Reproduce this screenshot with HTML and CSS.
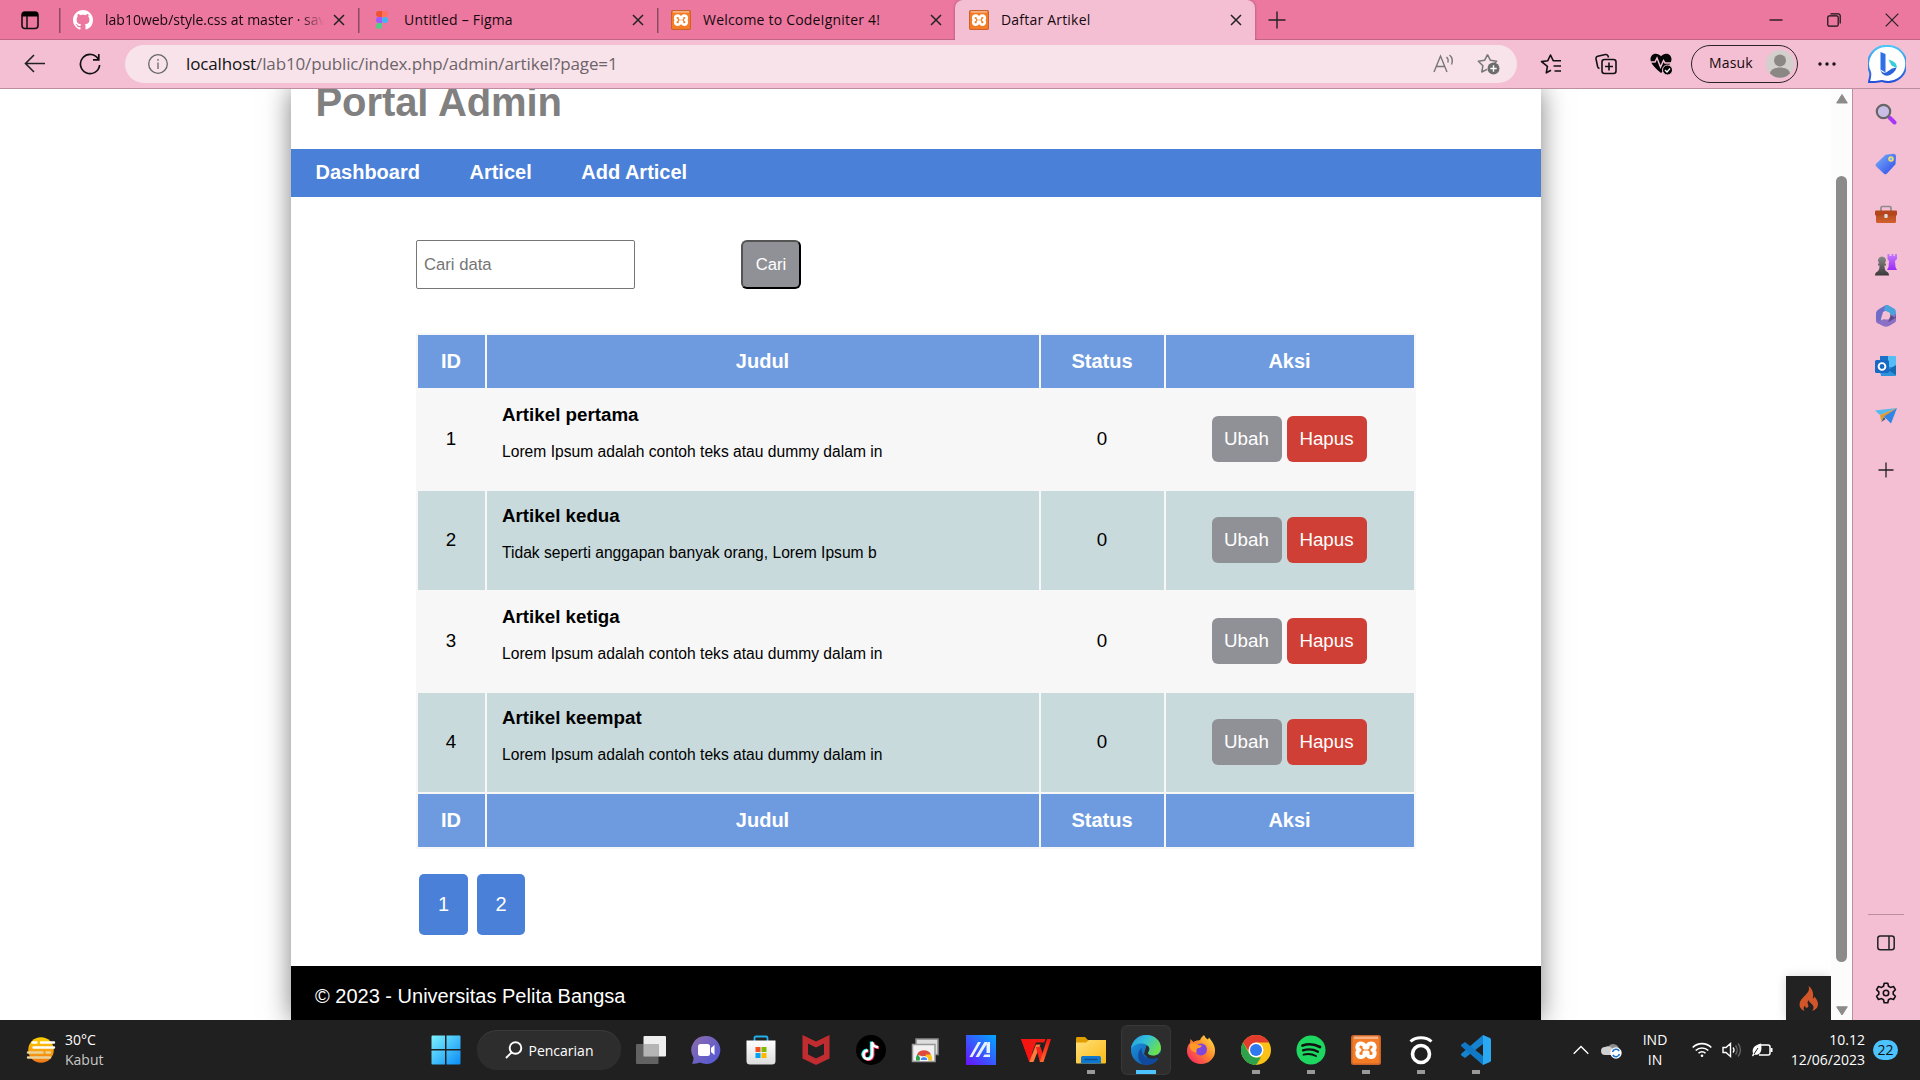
FILE: index.html
```html
<!DOCTYPE html>
<html lang="id">
<head>
<meta charset="utf-8">
<title>Daftar Artikel</title>
<link rel="stylesheet" href="styles.css">
</head>
<body>
<svg class="defs" width="0" height="0" aria-hidden="true">
  <defs>
    <linearGradient id="g-win" x1="0" y1="0" x2="1" y2="1"><stop offset="0" stop-color="#7df3ff"/><stop offset="1" stop-color="#0a8cf5"/></linearGradient>
    <linearGradient id="g-sun" x1="0" y1="0" x2="0" y2="1"><stop offset="0" stop-color="#ffd000"/><stop offset="1" stop-color="#f07818"/></linearGradient>
    <linearGradient id="g-bing" x1="0" y1="0" x2="0" y2="1"><stop offset="0" stop-color="#49c7f5"/><stop offset="1" stop-color="#2350d8"/></linearGradient>
    <linearGradient id="g-chat" x1="0" y1="0" x2="1" y2="1"><stop offset="0" stop-color="#8d6cab"/><stop offset="1" stop-color="#4f58d8"/></linearGradient>
    <linearGradient id="g-asus" x1="1" y1="0" x2="0" y2="1"><stop offset="0" stop-color="#00a8ff"/><stop offset="1" stop-color="#6a10ff"/></linearGradient>
    <linearGradient id="g-folder" x1="0" y1="0" x2="1" y2="1"><stop offset="0" stop-color="#ffe07a"/><stop offset="1" stop-color="#fbb914"/></linearGradient>
    <linearGradient id="g-edge" x1="0" y1="0" x2="1" y2=".5"><stop offset="0" stop-color="#2497e0"/><stop offset=".5" stop-color="#33c1d8"/><stop offset="1" stop-color="#6be04e"/></linearGradient>
    <linearGradient id="g-edge2" x1="0" y1="0" x2="1" y2="1"><stop offset="0" stop-color="#1d9be6"/><stop offset="1" stop-color="#0c4a9a"/></linearGradient>
    <linearGradient id="g-fox" x1="1" y1="0" x2="0" y2="1"><stop offset="0" stop-color="#fff04a"/><stop offset=".45" stop-color="#ff8a2b"/><stop offset="1" stop-color="#f5156c"/></linearGradient>
    <linearGradient id="g-tag" x1="0" y1="0" x2="1" y2="1"><stop offset="0" stop-color="#7bb4fb"/><stop offset="1" stop-color="#2c48e8"/></linearGradient>
    <linearGradient id="g-case" x1="0" y1="0" x2="0" y2="1"><stop offset="0" stop-color="#b04a20"/><stop offset="1" stop-color="#d2602c"/></linearGradient>
    <linearGradient id="g-pawn" x1="0" y1="0" x2="0" y2="1"><stop offset="0" stop-color="#8a8a8a"/><stop offset="1" stop-color="#3a3a3a"/></linearGradient>
    <linearGradient id="g-rook" x1="0" y1="0" x2="0" y2="1"><stop offset="0" stop-color="#c67bff"/><stop offset="1" stop-color="#9b2bf5"/></linearGradient>
    <linearGradient id="g-store" x1="0" y1="0" x2="0" y2="1"><stop offset="0" stop-color="#fff"/><stop offset="1" stop-color="#dcdcdc"/></linearGradient>
    <linearGradient id="g-wps" x1="0" y1="0" x2="0" y2="1"><stop offset="0" stop-color="#f5140f"/><stop offset="1" stop-color="#ff6a30"/></linearGradient>
    <symbol id="i-x" viewBox="0 0 12 12"><path d="M1 1l10 10M11 1L1 11" fill="none" stroke="currentColor" stroke-width="1.5"/></symbol>
    <symbol id="i-xampp" viewBox="0 0 30 30"><rect width="30" height="30" rx="2.5" fill="#c9632a"/><rect x="1.5" y="1.500" width="27" height="27" rx="1.500" fill="#f47c26"/><rect x="3" y="1.500" width="24" height="2.500" fill="#f8b184"/><path d="M10 8.500c-4 0-5 5-1.500 6.500C5 16.500 6 22 10 22c3 0 4-2 3.500-4.500h3C16 20 17.500 22 20 22c4 0 5-5.500 1.500-7C25 13.500 24 8.500 20 8.500c-2.500 0-4 1.500-3.500 4h-3c.5-2.500-1-4-3.500-4z" fill="none" stroke="#fff" stroke-width="4" stroke-linejoin="round"/></symbol>
  </defs>
</svg>

<div class="desktop">
  <header class="tabstrip">
    <div class="tab-actions"><svg width="18" height="19" viewBox="0 0 18 19"><rect x="1" y="1" width="16" height="16.500" rx="3" fill="none" stroke="#111" stroke-width="1.600"/><path d="M1 5.500V4a3 3 0 0 1 3-3h10a3 3 0 0 1 3 3v1.500z" fill="#000"/><path d="M6 5v12" stroke="#111" stroke-width="1.500"/></svg></div>
    <div class="tab">
      <svg class="fav" viewBox="0 0 16 16"><path fill="#fff" d="M8 0C3.580 0 0 3.580 0 8c0 3.540 2.290 6.530 5.470 7.590.4.070.55-.17.55-.38 0-.19-.01-.82-.01-1.490-2.010.37-2.530-.49-2.690-.94-.09-.23-.48-.94-.82-1.130-.28-.15-.68-.52-.01-.53.63-.01 1.080.58 1.230.82.72 1.210 1.870.87 2.330.66.070-.52.28-.87.51-1.070-1.780-.2-3.640-.89-3.640-3.950 0-.87.31-1.590.82-2.150-.08-.2-.36-1.020.08-2.120 0 0 .67-.21 2.200.82.64-.18 1.320-.27 2-.27s1.360.09 2 .27c1.530-1.040 2.200-.82 2.200-.82.44 1.100.16 1.920.08 2.120.51.56.82 1.270.82 2.150 0 3.070-1.870 3.750-3.650 3.950.29.25.54.73.54 1.480 0 1.070-.01 1.930-.01 2.200 0 .21.15.46.55.38A8.010 8.010 0 0 0 16 8c0-4.420-3.580-8-8-8z"/></svg>
      <span class="tab-title fade">lab10web/style.css at master · sav</span><svg class="close"><use href="#i-x"/></svg>
    </div>
    <div class="tab">
      <svg class="fav" viewBox="0 0 20 20"><path d="M7 1h3v6H7a3 3 0 0 1 0-6z" fill="#f0532d"/><path d="M10 1h3a3 3 0 0 1 0 6h-3z" fill="#ff7262"/><path d="M10 7H7a3 3 0 0 0 0 6h3z" fill="#a259ff"/><circle cx="13" cy="10" r="3" fill="#3fb5f5"/><path d="M10 13H7a3 3 0 1 0 3 3z" fill="#4fcf85"/></svg>
      <span class="tab-title wide">Untitled – Figma</span><svg class="close"><use href="#i-x"/></svg>
    </div>
    <div class="tab">
      <svg class="fav"><use href="#i-xampp"/></svg>
      <span class="tab-title wide">Welcome to CodeIgniter 4!</span><svg class="close"><use href="#i-x"/></svg>
    </div>
    <div class="tab active">
      <svg class="fav"><use href="#i-xampp"/></svg>
      <span class="tab-title wide">Daftar Artikel</span><svg class="close"><use href="#i-x"/></svg>
    </div>
    <div class="new-tab"><svg width="18" height="18"><path d="M9 .5v17M.5 9h17" stroke="#222" stroke-width="1.400"/></svg></div>
    <div class="win-controls">
      <svg viewBox="0 0 14 14"><path d="M.5 7h13" stroke="#111" stroke-width="1.300"/></svg>
      <svg viewBox="0 0 14 14"><g fill="none" stroke="#111" stroke-width="1.200"><rect x=".8" y="2.800" width="10.400" height="10.400" rx="1.500"/><path d="M3.500.8h7.700a2 2 0 0 1 2 2v7.700"/></g></svg>
      <svg viewBox="0 0 14 14"><path d="M.7.7l12.600 12.600M13.300.7L.7 13.300" stroke="#222" stroke-width="1.200"/></svg>
    </div>
  </header>

  <div class="toolbar">
    <svg class="back" width="22" height="20" viewBox="0 0 22 20" fill="none" stroke="#222" stroke-width="1.600"><path d="M21 9.500H1.500M10 1L1.500 9.500 10 18"/></svg>
    <svg class="reload" width="22" height="22" viewBox="0 0 22 22" fill="none" stroke="#111" stroke-width="1.700"><path d="M19.500 6.500A9.600 9.600 0 1 0 20.600 12M19.800 1v5.800H14"/></svg>
    <div class="address">
      <svg width="22" height="22" viewBox="0 0 22 22" fill="none" stroke="#666" stroke-width="1.300"><circle cx="11" cy="11" r="9.300"/><path d="M11 9.500v6.500M11 6v1.800"/></svg>
      <span class="url"><b>localhost</b>/lab10/public/index.php/admin/artikel?page=1</span>
      <svg class="read" width="22" height="20" viewBox="0 0 22 20" fill="none" stroke="#777" stroke-width="1.400"><path d="M1 18L7.500 2 14 18M3.200 12.500h8.600M13.500 3c1.700 1.500 2 3.300 1.300 5.500M16.500 1c3 2.500 3.500 5.500 2 9.500"/></svg>
      <svg class="star" width="23" height="22" viewBox="0 0 23 22"><path d="M10.500 1.500l2.900 5.800 6.300.9-4.600 4.500M10.500 1.500L7.600 7.300l-6.300.9 4.600 4.500-1.100 6.300 5.200-2.700" fill="none" stroke="#777" stroke-width="1.500" stroke-linejoin="round"/><circle cx="16.500" cy="15.500" r="6" fill="#6c6c6c"/><path d="M16.500 12.300v6.400M13.300 15.500h6.400" stroke="#fff" stroke-width="1.400"/></svg>
    </div>
    <div class="tools">
      <svg viewBox="0 0 22 22" fill="none" stroke="#111" stroke-width="1.600" stroke-linejoin="round"><path d="M11 17.300l-4.700 2.500 1.100-6.500L1.500 8.600l6.300-.9L10.500 2l2.700 5.700H21M13.500 13H21M14.500 18H21"/></svg>
      <svg viewBox="0 0 22 22" fill="none" stroke="#111" stroke-width="1.600"><rect x="7" y="6.500" width="14" height="14" rx="2.500"/><path d="M14 9.500v8M10 13.500h8M4.500 15.500c-1-.3-1.600-1-1.900-2L1 5.800c-.2-1.300.4-2.200 1.700-2.600L10.500 1.500c1.300-.2 2 .3 2.600 1.500l.4 1.500"/></svg>
      <svg viewBox="0 0 22 22"><path d="M11 3.200C8-.5 1-.3.500 6c-.2 5 6 10 10.500 14 4.500-4 10.700-9 10.500-14C21-.3 14-.5 11 3.200z" fill="#050505"/><path d="M1 9h4l2-4 3.500 9 3-6.500 1.500 2.500h6" fill="none" stroke="#f4bfd3" stroke-width="1.500"/><circle cx="17.500" cy="17" r="5" fill="#050505" stroke="#f4bfd3"/><path d="M15 17l2 2 3-3.500" fill="none" stroke="#fff" stroke-width="1.200"/></svg>
    </div>
    <div class="signin"><span>Masuk</span><svg width="28" height="28" viewBox="0 0 28 28"><circle cx="14" cy="14" r="14" fill="#d2cfcd"/><circle cx="14" cy="10.500" r="6" fill="#8b8784"/><path d="M4 23.500c.5-8 19.500-8 20 0a14 14 0 0 1-20 0z" fill="#8b8784"/></svg></div>
    <svg class="more" width="18" height="4"><g fill="#111"><circle cx="2" cy="2" r="1.700"/><circle cx="9" cy="2" r="1.700"/><circle cx="16" cy="2" r="1.700"/></g></svg>
    <svg class="bing" width="38" height="38" viewBox="0 0 38 38"><path d="M19.500 1a18 18 0 1 1-4.500 35.200c-3-.7-6 1.500-14 .8.800-5 2-6.500 1-10A18 18 0 0 1 19.500 1z" fill="#fff" stroke="url(#g-bing)" stroke-width="2"/><path d="M12.500 7l5 2v18.500l-5-3z" fill="#2f6fe8"/><path d="M12.500 24.500c1 3 3.500 3.500 5.500 3l6-4 4.500-1c-1 4-4 6-6.500 7.500-5 2-9-1-9.500-5.500z" fill="#2b62d9"/><path d="M20.500 14.500l3 6 5 2.500c1-4-2-6.500-8-8.500z" fill="#38cbd9"/></svg>
  </div>

  <div class="main">
    <div class="viewport">
      <div class="container">
        <header class="site-head"><h1>Portal Admin</h1></header>
        <nav class="site-nav"><a>Dashboard</a><a>Articel</a><a>Add Articel</a></nav>
        <section class="content">
          <form class="search"><input type="text" placeholder="Cari data"><button type="button">Cari</button></form>
          <table>
            <colgroup><col class="c-id"><col class="c-title"><col class="c-status"><col class="c-act"></colgroup>
            <thead><tr><th>ID</th><th>Judul</th><th>Status</th><th>Aksi</th></tr></thead>
            <tbody>
              <tr><td>1</td><td><h4>Artikel pertama</h4><p>Lorem Ipsum adalah contoh teks atau dummy dalam in</p></td><td>0</td><td><div class="acts"><a class="btn">Ubah</a><a class="btn danger">Hapus</a></div></td></tr>
              <tr><td>2</td><td><h4>Artikel kedua</h4><p>Tidak seperti anggapan banyak orang, Lorem Ipsum b</p></td><td>0</td><td><div class="acts"><a class="btn">Ubah</a><a class="btn danger">Hapus</a></div></td></tr>
              <tr><td>3</td><td><h4>Artikel ketiga</h4><p>Lorem Ipsum adalah contoh teks atau dummy dalam in</p></td><td>0</td><td><div class="acts"><a class="btn">Ubah</a><a class="btn danger">Hapus</a></div></td></tr>
              <tr><td>4</td><td><h4>Artikel keempat</h4><p>Lorem Ipsum adalah contoh teks atau dummy dalam in</p></td><td>0</td><td><div class="acts"><a class="btn">Ubah</a><a class="btn danger">Hapus</a></div></td></tr>
            </tbody>
            <tfoot><tr><th>ID</th><th>Judul</th><th>Status</th><th>Aksi</th></tr></tfoot>
          </table>
          <div class="pager"><a>1</a><a>2</a></div>
        </section>
        <footer class="site-foot">© 2023 - Universitas Pelita Bangsa</footer>
      </div>
      <div class="debug-icon"><svg width="20" height="26" viewBox="0 0 20 26"><path d="M9.500 0c1.500 4-.5 6.500-3.500 9.500-3 3-5.500 5.500-5.500 9 0 3 2 5.500 5 6.500-1.500-2-1-4 .5-5.500 0 1.500 1 2.500 2 2.300 1.500-.3 1.700-1.800 1-3.300-.6-1.500-.8-3 .7-4.500 0 2.500 4.500 4 4.800 7 .2 1.800-.7 3-1.500 4 3.500-1 6-3.500 6-7 0-3.500-2-5-3.300-7.500-.3 1-.9 1.700-1.900 2C15 8 13.500 2.500 9.500 0z" fill="#d3562a"/></svg></div>
    </div>
    <div class="scrollbar">
      <svg width="12" height="10"><path d="M6 .5L11.300 9H.7z" fill="#8b8b8b" stroke="#8b8b8b" stroke-linejoin="round"/></svg>
      <div class="thumb"></div>
      <svg width="12" height="10"><path d="M6 9L11.300 .8H.7z" fill="#8b8b8b" stroke="#8b8b8b" stroke-linejoin="round"/></svg>
    </div>
    <aside class="sidebar">
      <div class="apps">
        <svg viewBox="0 0 22 22"><path d="M14.500 14.500l5 5" stroke="#a838f5" stroke-width="4" stroke-linecap="round"/><circle cx="8.500" cy="8.500" r="6.700" fill="#c9bde6" stroke="#666" stroke-width="2.200"/></svg>
        <svg viewBox="0 0 22 22"><path d="M10.500 1.800L18.500.8c1.500 0 2.500 1 2.500 2.500l-.5 8L12 20.500c-1 1-2.200 1-3 .2L1.300 13.500c-1-1-1-2.200 0-3z" fill="url(#g-tag)"/><circle cx="16" cy="6" r="2" fill="#7bb4fb" stroke="#f5df6a" stroke-width="1.600"/></svg>
        <svg viewBox="0 0 22 22"><path d="M6 7V4c0-1 .7-1.500 1.500-1.500h7c1 0 1.500.5 1.500 1.500v3" fill="none" stroke="#8b8b8b" stroke-width="1.700"/><rect x="1" y="9" width="20" height="10" rx="1.500" fill="url(#g-case)"/><rect x="0" y="6.500" width="22" height="5" rx="1" fill="#b5451b"/><rect x="9.300" y="10" width="3.400" height="4" rx="1" fill="#ddd"/></svg>
        <svg viewBox="0 0 22 22"><path d="M12.500 0h2v2h2V0h2v2h1.500V0h2v5l-2 2 .5 6 1.500 3H12l1.500-3 .5-6-1.500-2z" fill="url(#g-rook)"/><path d="M7 2.500a4 4 0 0 1 2.700 7H11v2H9.500c0 3 .5 5 2 6 2 1 2.500 2 2.500 4H0c0-2 .5-3 2.500-4 1.500-1 2-3 2-6H3v-2h1.300A4 4 0 0 1 7 2.500z" fill="url(#g-pawn)"/></svg>
        <svg viewBox="0 0 22 22"><path d="M11 0L5 3.500C2 5.200 1 6.500 1 9v6.500c0 1.500 1 2.500 2 3l4 1.500-1-6 2-7 6-3z" fill="#6f6cc8"/><path d="M10 .6c2-1 3-.5 5 .6l4 2.300c1.500 1 2 2.300 2 4.500v6l-6-4.500V8L9 5z" fill="#4aa3dd"/><path d="M1 14c1 2 3 2.500 5 1.500L15 11l6-2v6c0 1.500-1 2.500-2 3l-5 3c-2 1-4 1-6 0l-5-3c-1.500-1-2-2-2-4z" fill="#8a6fc4"/><path d="M15 9.500l6 4V9c0 3-1.500 5-4 6l-4 2 2-4z" fill="#5a4a86"/><path d="M9.500 7.500h4l2 3.500-2 3.500h-4L7.500 11z" fill="#f4bfd3"/></svg>
        <svg viewBox="0 0 22 22"><rect x="5" y="1" width="16" height="18" rx="1" fill="#55bdf5"/><rect x="5" y="1" width="8" height="8" fill="#1c72c4"/><path d="M5 12h16v8a1 1 0 0 1-1 1H6z" fill="#2d92db"/><path d="M21 10v10L13 15z" fill="#1768b5"/><rect x="0" y="5" width="14" height="13" rx="1.500" fill="#1769c4"/><circle cx="7" cy="11.500" r="3.400" fill="none" stroke="#fff" stroke-width="1.900"/></svg>
        <svg viewBox="0 0 22 22"><path d="M0 5.500L22 3 5 10z" fill="#54b9ee"/><path d="M22 3L5 10l1.500 7L9 12z" fill="#dc9b35"/><path d="M22 3L9 11.500l7 7z" fill="#3285e4"/><path d="M9 12l-2.500 5 4-3z" fill="#36537f"/></svg>
        <svg class="add" viewBox="0 0 22 22"><path d="M11 3.500v15M3.500 11h15" stroke="#222" stroke-width="1.300"/></svg>
      </div>
      <div class="side-foot">
        <svg width="18" height="16" viewBox="0 0 18 16" fill="none" stroke="#222" stroke-width="1.500"><rect x=".8" y="1" width="16.400" height="13.800" rx="2.500"/><path d="M12 1v14"/></svg>
        <svg width="22" height="22" viewBox="0 0 22 22" fill="none" stroke="#111" stroke-width="1.600" stroke-linejoin="round"><path d="M9.200 1.200h3.600l.7 3 2 1.200 3-.9 1.900 3.200-2.200 2.200v2.200l2.200 2.200-1.900 3.200-3-.9-2 1.200-.7 3H9.200l-.7-3-2-1.200-3 .9-1.900-3.200 2.200-2.200V9.900L1.600 7.700l1.900-3.200 3 .9 2-1.200z"/><circle cx="11" cy="11" r="2.700"/></svg>
      </div>
    </aside>
  </div>

  <footer class="taskbar">
    <div class="weather">
      <svg width="30" height="28" viewBox="0 0 30 28"><circle cx="15" cy="14" r="12.800" fill="url(#g-sun)"/><g stroke-width="2.400" stroke-linecap="round"><path d="M6.500 6.500h4M15 6.500h13M7.500 11.500H28" stroke="#fff"/><path d="M2 16.500h14.500M20.500 16.500H24M2 21.500h22" stroke="#e9d39a"/></g></svg>
      <div class="stack"><span>30°C</span><span class="dim">Kabut</span></div>
    </div>
    <div class="start"><svg width="30" height="30" viewBox="0 0 30 30" fill="url(#g-win)"><path d="M1.500.5H14V14H.5V1.500a1 1 0 0 1 1-1zM15.500.5h13a1 1 0 0 1 1 1V14h-14zM.5 15.500H14V29.500H1.500a1 1 0 0 1-1-1zM15.500 15.500h14v13a1 1 0 0 1-1 1h-13z"/></svg></div>
    <div class="find"><svg width="18" height="18" viewBox="0 0 18 18" fill="none" stroke="#fff" stroke-width="1.900"><circle cx="10.500" cy="7" r="5.800"/><path d="M6.500 11.500L1 17"/></svg><span>Pencarian</span></div>
    <div class="pins">
      <div class="pin"><svg viewBox="0 0 30 30"><rect x="7.500" y="1" width="22.500" height="20.500" rx="1" fill="#eee"/><rect x="0" y="9" width="22.500" height="20" rx="1" fill="#666" fill-opacity=".95"/><rect x="7.500" y="9" width="15" height="12.500" fill="#b5b5b5"/></svg></div>
      <div class="pin"><svg viewBox="0 0 30 30"><path d="M15 1a14 14 0 1 1-6 26.500C7 28.500 4 29 1 28.500c1-1.500 1.500-3 1.500-6A14 14 0 0 1 15 1z" fill="url(#g-chat)"/><rect x="7" y="9" width="12" height="12" rx="2.500" fill="#fff"/><path d="M20 13l3.500-3v10L20 17z" fill="#fff"/></svg></div>
      <div class="pin"><svg viewBox="0 0 30 30"><path d="M8.500 7V3c0-1 .5-1.500 1.500-1.500h10c1 0 1.500.5 1.500 1.500v4" fill="none" stroke="#22b0ea" stroke-width="1.800"/><path d="M.5 5.500h29V26a3.500 3.500 0 0 1-3.500 3.500H4A3.500 3.500 0 0 1 .5 26z" fill="url(#g-store)"/><path d="M9.500 12h5v5h-5z" fill="#f25022"/><path d="M15.500 12h5v5h-5z" fill="#7fba00"/><path d="M9.500 18h5v5h-5z" fill="#00a4ef"/><path d="M15.500 18h5v5h-5z" fill="#ffb900"/></svg></div>
      <div class="pin"><svg viewBox="0 0 30 30"><path d="M1.500 0L15 6.500 28.500 0v23.500L15 30 1.500 23.500zM7 8.500v11l8 4 8-4v-11l-8 4z" fill="#c12c30" fill-rule="evenodd"/></svg></div>
      <div class="pin"><svg viewBox="0 0 30 30"><circle cx="15" cy="15" r="15" fill="#000"/><g fill="none" stroke-width="3"><path d="M15.300 6.500v12.800a4.300 4.300 0 1 1-4.300-4.300M15.300 6.500c.3 3.200 2.500 5 6 5.200" stroke="#25f4ee"/><path d="M17 7.500v12.800a4.300 4.300 0 1 1-4.300-4.300M17 7.500c.3 3.200 2.500 5 6 5.200" stroke="#fe2c55"/><path d="M16.200 7v12.800a4.300 4.300 0 1 1-4.300-4.300M16.200 7c.3 3.200 2.500 5 6 5.200" stroke="#fff" stroke-width="2.600"/></g></svg></div>
      <div class="pin"><svg viewBox="0 0 30 30"><rect x="5" y="4" width="22" height="15.500" fill="#ddd" stroke="#8a8a8a" stroke-width="1.500"/><rect x="1.500" y="9.500" width="22.500" height="17" fill="#f1f1f1" stroke="#999" stroke-width="1.500"/><path d="M5 25.500a8 8 0 0 1 1.500-6.500L11 25.500z" fill="#2ea44f"/><path d="M6 19.500a8 8 0 0 1 14 0l-7 2.500z" fill="#de4a3d"/><path d="M13 25.500l2-6h5a8 8 0 0 1 1 6z" fill="#fbc116"/><path d="M9 25.500a4 4 0 0 1 8 0z" fill="#4285f4" stroke="#fff"/></svg></div>
      <div class="pin"><svg viewBox="0 0 30 30"><rect width="30" height="30" fill="url(#g-asus)"/><path d="M3.500 22L12 7h3L6.500 22zM9.500 22L18.500 7h3.500L12.800 22zM20.500 9.500L22.500 7H24v11h-3.500zM18.500 19.500h5.500V22h-7z" fill="#e8f2ff"/></svg></div>
      <div class="pin"><svg viewBox="0 0 30 30"><path d="M0 4h24.500l-1.200 3.500H15L10.500 19.500 6.500 8H5.500L10.500 27H8.500z" fill="#f01a12"/><path d="M0 4h6.500l5 15L9.500 27H8.300z" fill="#f5140f"/><path d="M8.300 27L15 9.500h4.500L12.500 27z" fill="#ff7a3d"/><path d="M15 12h4.500l3 9-2.500 6h-1.200z" fill="#f5231a"/><path d="M18.800 27L26 4h4l-7.500 23z" fill="url(#g-wps)"/></svg></div>
      <div class="pin run"><svg viewBox="0 0 30 30"><path d="M0 3.500C0 2.500.5 2 1.500 2H9l3 3h16.500c1 0 1.500.5 1.500 1.500V12H0z" fill="#e09d00"/><path d="M0 7.500h10L13 5h17v22.500a1 1 0 0 1-1 1H1a1 1 0 0 1-1-1z" fill="url(#g-folder)"/><path d="M5 28.500V23c0-1.500 1-2 2-2h16c1 0 2 .5 2 2v5.500z" fill="#0f78d0"/><path d="M9 24.500h12" stroke="#0a4f94" stroke-width="1.300" stroke-linecap="round"/></svg></div>
      <div class="pin run current"><svg viewBox="0 0 30 30"><circle cx="15" cy="15" r="15" fill="url(#g-edge2)"/><path d="M15.500 10.500c3 0 3.500 3 2.500 5-1 1.500-1 5 5 5 3 0 5-1 7-4l-2 7.500-9 1-6-6z" fill="#2d2d2d"/><path d="M0 14C1 5 8 0 15.500 0 24 0 30 6 30 13c0 5-4 7.500-8 7.500-3 0-5-1-5-2.500 0-1 1.500-1.500 1.500-4 0-3-3.500-5.500-8-5.500C6 8.500 2 10.500 0 14z" fill="url(#g-edge)"/><path d="M10.800 13C9.500 20.500 17 26 25.500 23c1-.3 2 .2 1.300 1.200C24 28.500 19.500 30 15.500 30 7 30 4.500 18 10.800 13z" fill="#114a9c"/></svg></div>
      <div class="pin"><svg viewBox="0 0 30 30"><path d="M18 0c1 2 1.500 3 4 4.500l1-2C26 6 29.500 11 29 16a14 13 0 0 1-28 0c0-4 1-6 3-8l.5-4 3 3C9 6 10 5.500 12 5.500L14 5c1-2 2-3.500 4-5z" fill="url(#g-fox)"/><circle cx="15" cy="14.500" r="6" fill="#8046dc"/><path d="M4 9c3-1 6-1 8 1l4 .5c-1 2-2.500 2.500-4 2.500-2 1-2 3-1 4.500C5 17 3 13 4 9z" fill="#ff9a26"/></svg></div>
      <div class="pin run"><svg viewBox="0 0 30 30"><circle cx="15" cy="15" r="15" fill="#fbc116"/><path d="M2 7.500A15 15 0 0 1 28 7.500H15L9 18z" fill="#e33b2e"/><path d="M2 7.500L8.500 19 15 22.500h5L15 30A15 15 0 0 1 2 7.500z" fill="#2da14c"/><circle cx="15" cy="15" r="7.500" fill="#fff"/><circle cx="15" cy="15" r="6" fill="#2f79ee"/></svg></div>
      <div class="pin run"><svg viewBox="0 0 30 30"><circle cx="15" cy="15" r="14.500" fill="#1ed760"/><g fill="none" stroke="#111" stroke-linecap="round"><path d="M6.500 10.500c6-2 12.500-1.300 17.500 1.500" stroke-width="2.700"/><path d="M7 15.300c5.500-1.500 10.500-1 15 1.500" stroke-width="2.300"/><path d="M7.500 19.700c4.500-1.200 8.500-.8 12.500 1.300" stroke-width="1.900"/></g></svg></div>
      <div class="pin run"><svg><use href="#i-xampp"/></svg></div>
      <div class="pin run"><svg viewBox="0 0 30 30" fill="none" stroke="#fff"><circle cx="15" cy="19" r="8.500" stroke-width="3.600"/><path d="M4.500 6.500C10 1.500 20 1.500 25.500 6.500" stroke-width="3"/></svg></div>
      <div class="pin run"><svg viewBox="0 0 30 30"><path d="M22 0v9L4 23l-3.500-2.500c-.7-.6-.7-1.500 0-2z" fill="#1583cf"/><path d="M.5 9.500L4 7l18 14v9L.5 11.500c-.7-.6-.7-1.400 0-2z" fill="#1078c4"/><path d="M22 0l7 3c.7.400 1 1 1 1.700v20.600c0 .7-.3 1.300-1 1.700l-7 3z" fill="#2aa8f2"/></svg></div>
    </div>
    <div class="tray">
      <svg class="up" width="16" height="10" viewBox="0 0 16 10"><path d="M.7 8.800L8 1.500l7.300 7.300" fill="none" stroke="#fff" stroke-width="1.400"/></svg>
      <svg class="cloud" width="21" height="18" viewBox="0 0 21 18"><path d="M7 6a6 6 0 0 1 11 2l-6 6H8z" fill="#8d8d8d"/><path d="M4 14a4 4 0 0 1 0-8 6 6 0 0 1 7 1l2 7z" fill="#d0d0d0"/><circle cx="15" cy="12" r="5.700" fill="#fff"/><path d="M11.500 11a3.700 3.700 0 0 1 6.700-1M18.500 13a3.700 3.700 0 0 1-6.700 1" fill="none" stroke="#1570cf" stroke-width="1.500"/></svg>
      <div class="stack lang"><span>IND</span><span>IN</span></div>
      <svg class="wifi" width="20" height="16" viewBox="0 0 20 16" fill="none" stroke="#fff" stroke-width="1.600"><path d="M.7 5.500a13 13 0 0 1 18.600 0M3.700 8.500a9 9 0 0 1 12.600 0M6.500 11.300a5 5 0 0 1 7 0"/><circle cx="10" cy="13.800" r="1.300" fill="#fff" stroke="none"/></svg>
      <svg class="vol" width="20" height="16" viewBox="0 0 20 16" fill="none" stroke="#fff" stroke-width="1.400"><path d="M1 5.500h3L8.500 1.500v13L4 10.500H1zM11 5.500a4 4 0 0 1 0 5"/><path d="M13.500 3.500a7 7 0 0 1 0 9M16 1.500a10 10 0 0 1 0 13" stroke="#666"/></svg>
      <svg class="bat" width="21" height="16" viewBox="0 0 21 16"><path d="M8.500 3H16a2 2 0 0 1 2 2v6a2 2 0 0 1-2 2H7" fill="none" stroke="#fff" stroke-width="1.500"/><path d="M18.500 6h2v4h-2z" fill="#fff"/><path d="M9 1.500C10 7 9.500 11 6 12.500c-1.500.5-3 .3-3.500 0L1 14.500 0 13.500l1-2C-.5 6 3 3 9 1.500z" fill="#fff"/><path d="M2 12l4-6" stroke="#202020"/></svg>
      <div class="stack clock"><span>10.12</span><span>12/06/2023</span></div>
      <div class="badge">22</div>
    </div>
  </footer>
</div>
</body>
</html>
```
FILE: styles.css
```css
* { box-sizing: border-box; }
body { margin: 0; background: #fff; font-family: "Open Sans", "Noto Sans", sans-serif; }
svg { display: block; flex: none; }
.defs { position: absolute; }
.desktop { width: 1920px; height: 1080px; display: flex; flex-direction: column; overflow: hidden; }

/* tab strip */
.tabstrip { height: 40px; flex: none; display: flex; background: #ec789f; box-shadow: inset 0 -1px #c26484; }
.tab-actions { width: 59px; padding: 11px 0 0 21px; }
.tab { width: 299px; display: flex; align-items: center; padding: 0 13px 0 14px; background: linear-gradient(#8a4a60, #8a4a60) 0 8px / 1.5px 25px no-repeat; }
.tab:nth-child(4) { width: 298px; }
.tab.active { background: #f4bfd3; border-radius: 8px 8px 0 0; width: 300px; box-shadow: 0 0 3px #a05070; clip-path: inset(0 -4px 0 -4px); }
.fav { width: 20px; height: 20px; }
.tab-title { flex: 1; margin-left: 12px; font-size: 14px; line-height: 20px; color: #16090e; white-space: nowrap; overflow: hidden; }
.wide { letter-spacing: .2px; }
.fade { -webkit-mask: linear-gradient(90deg, #000 195px, transparent 219px); mask: linear-gradient(90deg, #000 195px, transparent 219px); }
.close { width: 12px; height: 12px; color: #222; }
.new-tab { padding: 11px 0 0 13px; }
.win-controls { margin-left: auto; display: flex; align-items: center; gap: 44px; padding-right: 21.500px; }
.win-controls svg { width: 14px; height: 14px; }

/* toolbar */
.toolbar { height: 49px; flex: none; display: flex; align-items: center; background: #f4bfd3; border-bottom: 1px solid #bd8da0; padding: 0 14px 0 24px; }
.reload { margin-left: 33px; }
.address { margin-left: 24px; width: 1392px; height: 38px; border-radius: 19px; background: #f8e3ea; display: flex; align-items: center; padding: 0 17px 0 22px; }
.url { margin: -2px 0 0 17px; font-size: 17px; letter-spacing: -.13px; color: #6d6469; flex: 1; white-space: nowrap; }
.url b { font-weight: 400; color: #111; }
.star { margin-left: 22px; }
.tools { display: flex; gap: 33px; margin-left: 23px; }
.tools svg { width: 22px; height: 22px; }
.signin { margin-left: 19px; width: 107px; height: 38px; border: 1.5px solid #2b2227; border-radius: 19px; display: flex; align-items: center; justify-content: space-between; padding: 0 3px 0 17px; font-size: 14px; letter-spacing: .15px; line-height: 18px; color: #16090e; }
.signin span { margin-top: -2px; }
.more { margin-left: 20px; }
.bing { margin-left: auto; }

/* browser body */
.main { flex: 1; display: flex; min-height: 0; }
.viewport { position: relative; width: 1831px; overflow: hidden; background: #fff; }
.scrollbar { width: 21px; background: #fcfcfc; display: flex; flex-direction: column; align-items: center; padding: 5px 0 4px; }
.thumb { width: 11px; height: 786px; margin: 72px 0 auto; border-radius: 6px; background: #8b8b8b; }
.sidebar { flex: 1; border-left: 1px solid #bd8da0; background: #f4bfd3; display: flex; flex-direction: column; align-items: center; padding: 14px 2px 0 0; }
.apps { display: flex; flex-direction: column; gap: 28.400px; }
.apps svg { width: 22px; height: 22px; }
.apps .add { margin-top: 3px; }
.side-foot { margin-top: auto; width: 36px; height: 106px; border-top: 1px solid #b98fa0; display: flex; flex-direction: column; align-items: center; gap: 31px; padding-top: 20px; }

/* site */
.container { width: 1250px; margin-left: 291px; height: 931px; display: flex; flex-direction: column; background: #fff; box-shadow: 0 0 25px rgba(0, 0, 0, .5); font-family: "Liberation Sans", Arial, sans-serif; color: #000; }
.site-head { height: 60px; overflow: hidden; padding-left: 24.500px; }
.site-head h1 { margin: -7px 0 0; font-size: 40px; line-height: 40px; letter-spacing: -.08px; color: #808080; }
.site-nav { height: 48px; background: #4a80d8; padding-left: 24.500px; display: flex; gap: 49.500px; }
.site-nav a { color: #fff; font-size: 20px; font-weight: 700; line-height: 46px; }
.content { height: 769px; padding: 43px 125px 0; }
.search { display: flex; height: 49px; }
.search input { width: 219px; border: 1px solid #767676; border-radius: 2px; padding: 0 7px; font: 16.670px "Liberation Sans", Arial, sans-serif; }
.search input::placeholder { color: #757575; }
.search button { margin-left: 106px; width: 60px; padding: 0; border: 2px outset #000; border-radius: 6px; background: #909197; color: #fff; font: 16.670px "Liberation Sans", Arial, sans-serif; }
table { margin-top: 44px; width: 1000px; table-layout: fixed; border-spacing: 2px; background: #f7f7f7; font-size: 18.750px; }
.c-id { width: 67px; } .c-title { width: 552px; } .c-status { width: 123px; } .c-act { width: 248px; }
th { height: 53px; padding: 0 1px 0 0; background: #6e9be0; color: #fff; font-size: 20px; }
td { height: 99px; padding: 0 1px 1px 0; text-align: center; }
tbody tr:nth-child(even) td { background: #c8dadc; }
td:nth-child(2) { text-align: left; vertical-align: top; padding: 14px 0 0 15px; }
td h4 { margin: 0; font-size: 18.750px; line-height: 22px; }
td p { margin: 16px 0 0; font-size: 15.630px; line-height: 20px; }
.acts { display: flex; justify-content: center; gap: 5px; margin-right: 1px; }
.btn { width: 70px; height: 46px; line-height: 46px; border-radius: 6px; background: #909197; color: #fff; }
.danger { width: 80px; background: #cf3f36; }
.pager { margin: 25px 0 0 3px; display: flex; gap: 9px; }
.pager a { width: 49px; height: 61px; line-height: 60px; border-radius: 5px; background: #4a80d8; color: #fff; font-size: 20px; text-align: center; }
.pager a + a { width: 48px; }
.site-foot { flex: 1; background: #000; color: #fff; padding: 18px 0 0 24px; font-size: 20px; line-height: 24px; }
.debug-icon { position: absolute; right: 0; bottom: 0; width: 45px; height: 44px; padding: 10px 0 0 13px; background: #222; box-shadow: 0 0 10px rgba(0, 0, 0, .15); }

/* taskbar */
.taskbar { height: 60px; flex: none; display: flex; align-items: center; background: #202020; color: #fff; font-size: 14px; }
.weather { display: flex; align-items: center; gap: 9px; width: 430.500px; padding-left: 26px; }
.stack { display: flex; flex-direction: column; line-height: 20px; white-space: nowrap; }
.dim { color: #c8c8c8; }
.find { margin-left: 16px; width: 144px; height: 40px; border-radius: 20px; background: #2d2d2d; box-shadow: inset 0 1px #3a3a3a; display: flex; align-items: center; gap: 6px; padding-left: 28px; }
.pins { display: flex; margin-left: 2.500px; }
.pin { width: 55.070px; height: 60px; display: flex; justify-content: center; align-items: center; background-repeat: no-repeat; }
.pin svg { width: 30px; height: 30px; }
.run { background-image: linear-gradient(#999, #999); background-size: 8px 4px; background-position: 50% 50px; }
.current { width: 50px; height: 50px; margin: 5px 2.535px; border-radius: 6px; background-color: #2d2d2d; background-image: linear-gradient(#4cc2ff, #4cc2ff); background-size: 20px 4px; background-position: 50% 45px; box-shadow: inset 0 0 0 1px #383838; }
.tray { margin-left: auto; display: flex; align-items: center; padding-right: 22px; }
.cloud { margin-left: 12px; }
.lang { width: 46px; margin-left: 10px; align-items: center; }
.wifi { margin-left: 14px; }
.vol { margin-left: 10px; }
.bat { margin-left: 10px; }
.clock { width: 92px; align-items: flex-end; }
.badge { margin-left: 8px; width: 25px; height: 20px; border-radius: 10px; background: #4cc2ff; color: #111; text-align: center; line-height: 20px; font-size: 14px; }
```
